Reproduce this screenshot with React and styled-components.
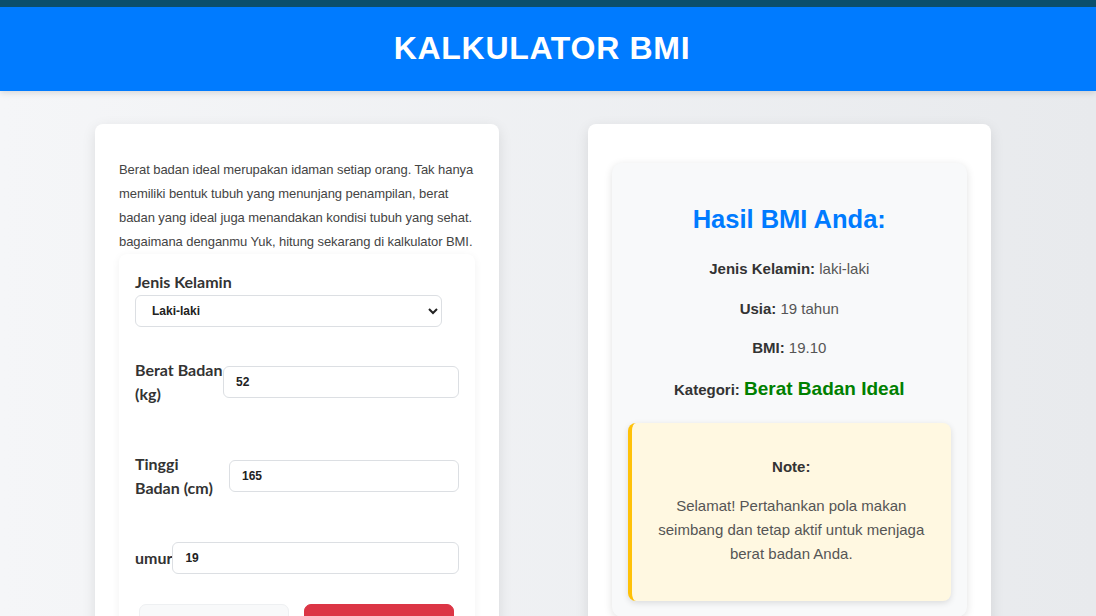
import React from "react";
import styled, { createGlobalStyle } from "styled-components";

const GlobalStyle = createGlobalStyle`
  body {
    margin: 0;
    font-family: "Liberation Sans", Arial, sans-serif;
    background: linear-gradient(to right, #f5f6f8, #e8eaed);
    min-height: 100vh;
  }
`;

const Header = styled.header`
  background: #007bff;
  border-top: 7px solid #0b4f6c;
  box-shadow: 0 2px 6px rgba(0, 0, 0, 0.12);
  padding: 23px 12px 24px 0;
  text-align: center;
`;

const Title = styled.h1`
  margin: 0;
  color: #fff;
  font-size: 32px;
  line-height: 37px;
  font-weight: 700;
  letter-spacing: 0.7px;
`;

const Main = styled.main`
  display: grid;
  grid-template-columns: 1fr 1fr;
  gap: 89px;
  padding: 33px 105px 40px 95px;
`;

const Card = styled.section`
  background: #fff;
  border-radius: 8px;
  box-shadow: 0 4px 14px rgba(0, 0, 0, 0.1);
  padding: 24px;
`;

const Intro = styled.p`
  margin: 10px 0 0;
  font-size: 13px;
  letter-spacing: -0.07px;
  line-height: 24px;
  color: #444;
`;

const FormBox = styled.form`
  background: #fff;
  border-radius: 8px;
  box-shadow: 0 2px 8px rgba(0, 0, 0, 0.06);
  padding: 17px 16px 20px;
`;

const Label = styled.label`
  display: block;
  font-family: Lato, "Open Sans", sans-serif;
  font-weight: 700;
  font-size: 16px;
  line-height: 22px;
  color: #333;
  margin-bottom: 2px;
`;

const Select = styled.select`
  width: 95%;
  height: 32px;
  border: 1px solid #dcdfe3;
  border-radius: 6px;
  background: #fff;
  padding: 0 10px 0 12px;
  font-family: "Liberation Sans", Arial, sans-serif;
  font-weight: 700;
  font-size: 12px;
  color: #222;
`;

const Row = styled.div`
  display: flex;
  align-items: center;
  margin-top: ${(p) => p.$gap}px;
`;

const RowLabel = styled.label`
  flex: none;
  min-width: ${(p) => p.$minWidth || 0}px;
  white-space: nowrap;
  font-family: Lato, "Open Sans", sans-serif;
  font-weight: 700;
  font-size: 16px;
  line-height: 24px;
  color: #333;
`;

const Input = styled.input`
  flex: 1;
  min-width: 0;
  height: 32px;
  box-sizing: border-box;
  border: 1px solid #dcdfe3;
  border-radius: 6px;
  padding: 0 12px;
  font-family: "Liberation Sans", Arial, sans-serif;
  font-weight: 700;
  font-size: 12px;
  color: #222;
`;

const Buttons = styled.div`
  display: flex;
  gap: 15px;
  padding: 0 4px;
  margin-top: 30px;
`;

const Button = styled.button`
  width: 150px;
  height: 40px;
  border-radius: 7px;
  border: 1px solid ${(p) => (p.$danger ? "#dc3545" : "#eef0f2")};
  background: ${(p) => (p.$danger ? "#dc3545" : "#f8f9fa")};
  color: ${(p) => (p.$danger ? "#fff" : "#333")};
  font-family: "Liberation Sans", Arial, sans-serif;
  font-weight: 700;
  font-size: 15px;
`;

const ResultBox = styled.div`
  margin-top: 15px;
  background: #f8f9fa;
  border-radius: 10px;
  box-shadow: 0 2px 8px rgba(0, 0, 0, 0.12);
  padding: 20px 16px 16px;
  text-align: center;
`;

const ResultTitle = styled.h2`
  margin: 22px 0 23px;
  font-size: 25.5px;
  line-height: 29px;
  color: #007bff;
`;

const ResultLine = styled.p`
  margin: 15.5px 0;
  font-size: 15px;
  line-height: 24px;
  color: #555;

  b {
    color: #333;
  }
`;

const LastLine = styled(ResultLine)`
  margin-top: 17px;
`;

const Category = styled.span`
  color: #008000;
  font-weight: 700;
  font-size: 19px;
`;

const Note = styled.div`
  margin-top: 21px;
  background: #fff8e1;
  border-left: 4px solid #ffc107;
  border-radius: 8px;
  box-shadow: 0 2px 6px rgba(0, 0, 0, 0.12);
  padding: 17px 20px 20px;
`;

const NoteText = styled.p`
  margin: 15px 0;
  font-size: 15px;
  line-height: 24px;
  color: #555;

  b {
    color: #333;
  }
`;

export default function App() {
  return (
    <>
      <GlobalStyle />
      <Header>
        <Title>KALKULATOR BMI</Title>
      </Header>
      <Main>
        <Card>
          <Intro>
            Berat badan ideal merupakan idaman setiap orang. Tak hanya memiliki
            bentuk tubuh yang menunjang penampilan, berat badan yang ideal juga
            menandakan kondisi tubuh yang sehat. bagaimana denganmu Yuk, hitung
            sekarang di kalkulator BMI.
          </Intro>
          <FormBox>
            <Label htmlFor="gender">Jenis Kelamin</Label>
            <Select id="gender" defaultValue="laki-laki">
              <option value="laki-laki">Laki-laki</option>
              <option value="perempuan">Perempuan</option>
            </Select>

            <Row $gap={31}>
              <RowLabel htmlFor="berat" $minWidth={88}>
                Berat Badan
                <br />
                (kg)
              </RowLabel>
              <Input id="berat" type="text" defaultValue="52" />
            </Row>

            <Row $gap={46}>
              <RowLabel htmlFor="tinggi" $minWidth={94}>
                Tinggi
                <br />
                Badan (cm)
              </RowLabel>
              <Input id="tinggi" type="text" defaultValue="165" />
            </Row>

            <Row $gap={42}>
              <RowLabel htmlFor="umur">umur</RowLabel>
              <Input id="umur" type="text" defaultValue="19" />
            </Row>

            <Buttons>
              <Button type="reset">Reset</Button>
              <Button type="submit" $danger>
                Hitung BMI
              </Button>
            </Buttons>
          </FormBox>
        </Card>

        <Card>
          <ResultBox>
            <ResultTitle>Hasil BMI Anda:</ResultTitle>
            <ResultLine>
              <b>Jenis Kelamin:</b> laki-laki
            </ResultLine>
            <ResultLine>
              <b>Usia:</b> 19 tahun
            </ResultLine>
            <ResultLine>
              <b>BMI:</b> 19.10
            </ResultLine>
            <LastLine>
              <b>Kategori:</b> <Category>Berat Badan Ideal</Category>
            </LastLine>
            <Note>
              <NoteText>
                <b>Note:</b>
              </NoteText>
              <NoteText>
                Selamat! Pertahankan pola makan seimbang dan tetap aktif untuk
                menjaga berat badan Anda.
              </NoteText>
            </Note>
          </ResultBox>
        </Card>
      </Main>
    </>
  );
}
